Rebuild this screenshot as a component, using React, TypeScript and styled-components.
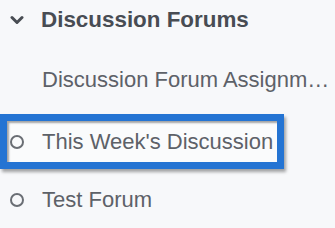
import styled, { createGlobalStyle } from "styled-components";

const GlobalStyle = createGlobalStyle`
  html, body {
    margin: 0;
    padding: 0;
    background-color: #f7f8fa;
    font-family: "Liberation Sans", Arial, sans-serif;
  }
`;

const Nav = styled.nav`
  width: 335px;
  height: 228px;
  overflow: hidden;
  background-color: #f7f8fa;
`;

const Heading = styled.div`
  display: flex;
  align-items: center;
  gap: 17px;
  height: 40px;
  margin-bottom: 10px;
  padding-left: 10px;
  font-size: 22.4px;
  font-weight: 700;
  color: #484c53;
  white-space: nowrap;
`;

const List = styled.ul`
  list-style: none;
  margin: 0;
  padding: 0;
`;

const Item = styled.li`
  height: 60px;
  display: flex;
  align-items: flex-start;
`;

interface RowProps {
  $focused?: boolean;
}

const Row = styled.a<RowProps>`
  display: flex;
  align-items: center;
  gap: 18px;
  box-sizing: border-box;
  width: ${({ $focused }) => ($focused ? "fit-content" : "100%")};
  height: ${({ $focused }) => ($focused ? "55px" : "60px")};
  margin-top: ${({ $focused }) => ($focused ? "4px" : "0")};
  padding-left: ${({ $focused }) => ($focused ? "3px" : "10px")};
  padding-right: ${({ $focused }) => ($focused ? "4px" : "0")};
  border: ${({ $focused }) => ($focused ? "7px solid #2474d3" : "none")};
  background-color: ${({ $focused }) => ($focused ? "#fafbfc" : "transparent")};
  box-shadow: ${({ $focused }) =>
    $focused
      ? "inset 2px 2px 2px rgba(0,0,0,0.35), 2px 3px 3px rgba(0,0,0,0.35)"
      : "none"};
  color: #5d6168;
  font-size: 22px;
  text-decoration: none;
  white-space: nowrap;
`;

const Label = styled.span<{ $indent?: boolean }>`
  overflow: hidden;
  text-overflow: ellipsis;
  max-width: ${({ $indent }) => ($indent ? "291px" : "none")};
  margin-left: ${({ $indent }) => ($indent ? "32px" : "0")};
`;

const Bullet = styled.span`
  display: inline-block;
  box-sizing: border-box;
  width: 14px;
  height: 14px;
  flex-shrink: 0;
  border: 2px solid #6a6e74;
  border-radius: 50%;
`;

const Chevron = () => (
  <svg width="14" height="10" viewBox="0 0 14 10" aria-hidden="true">
    <path
      d="M2 2.5 L7 7.5 L12 2.5"
      fill="none"
      stroke="#484c53"
      strokeWidth="3"
      strokeLinecap="round"
      strokeLinejoin="round"
    />
  </svg>
);

export default function App() {
  return (
    <>
      <GlobalStyle />
      <Nav>
        <Heading>
          <Chevron />
          <span>Discussion Forums</span>
        </Heading>
        <List>
          <Item>
            <Row href="#">
              <Label $indent>Discussion Forum Assignment</Label>
            </Row>
          </Item>
          <Item>
            <Row href="#" $focused>
              <Bullet />
              <Label>This Week's Discussion</Label>
            </Row>
          </Item>
          <Item>
            <Row href="#">
              <Bullet />
              <Label>Test Forum</Label>
            </Row>
          </Item>
        </List>
      </Nav>
    </>
  );
}
